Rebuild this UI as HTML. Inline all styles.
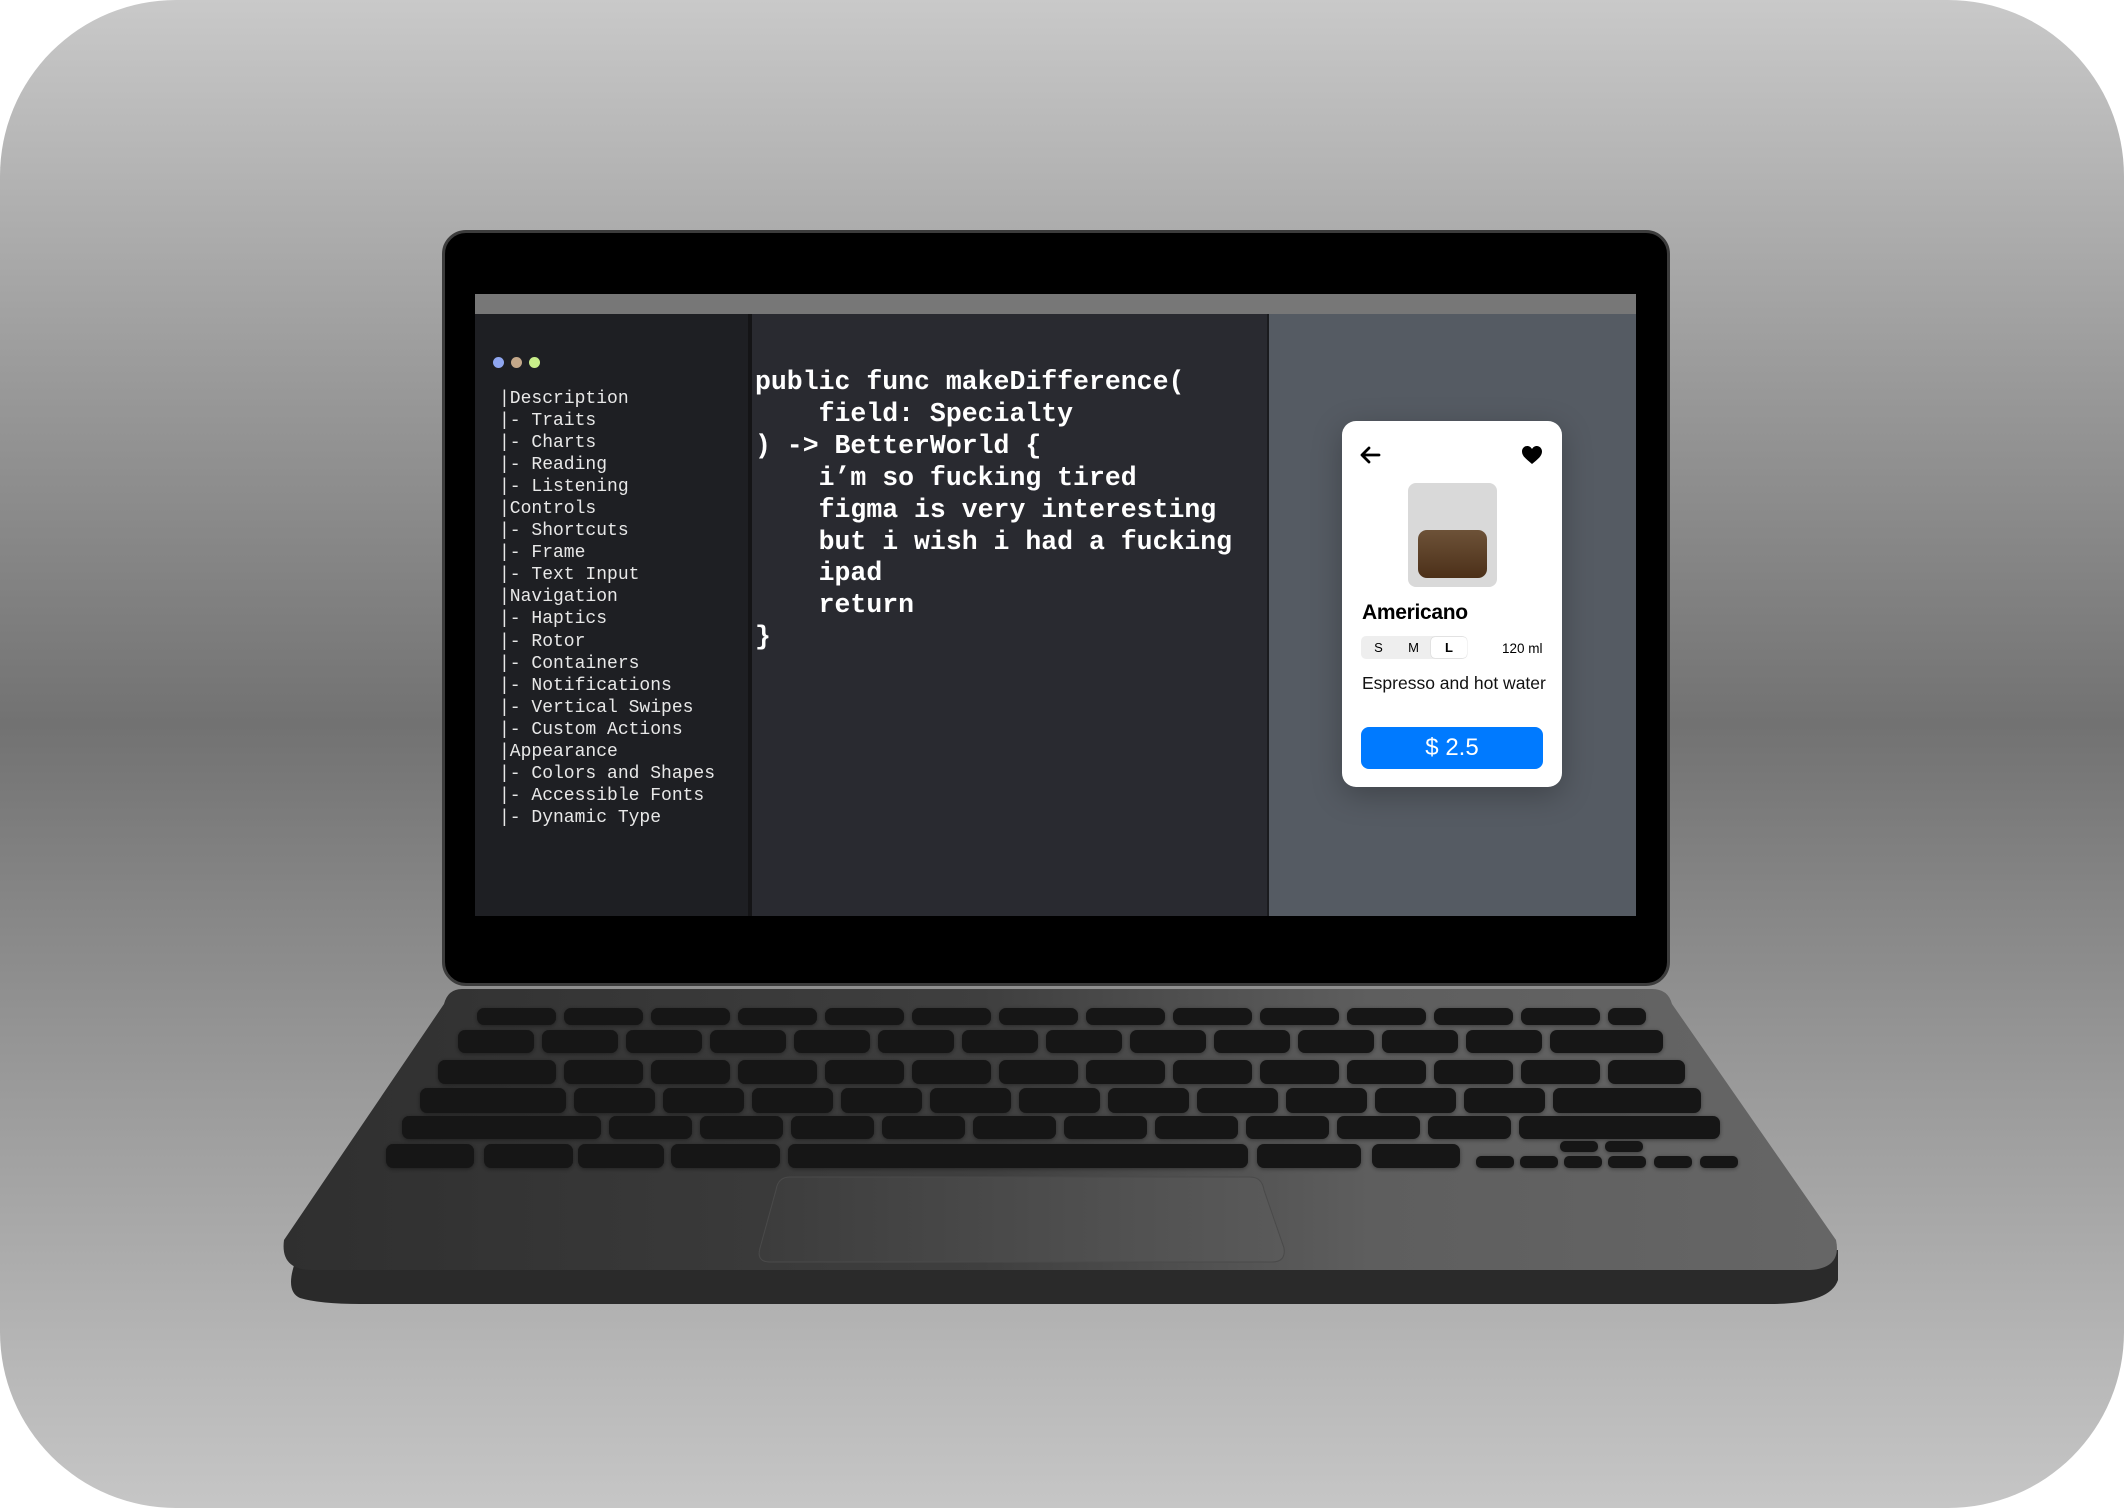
<!DOCTYPE html>
<html><head><meta charset="utf-8"><style>
html,body{margin:0;padding:0;background:#fff;}
body{width:2124px;height:1508px;position:relative;overflow:hidden;font-family:"Liberation Sans",sans-serif;}
.bg{position:absolute;left:0;top:0;width:2124px;height:1508px;border-radius:176px;background:linear-gradient(180deg,#c9c9c9 0%,#9a9a9a 25%,#727272 48%,#9a9a9a 72%,#c6c6c6 100%);}
.lid{position:absolute;left:442px;top:230px;width:1222px;height:750px;background:#000;border:3px solid #3c3c3c;border-radius:24px;}
.screen{position:absolute;left:475px;top:294px;width:1161px;height:622px;overflow:hidden;}
.bar{position:absolute;left:0;top:0;width:1161px;height:20px;background:#777;}
.side{position:absolute;left:0;top:20px;width:273px;height:602px;background:#1e1f23;}
.div1{position:absolute;left:273px;top:20px;width:4px;height:602px;background:#141416;}
.code{position:absolute;left:277px;top:20px;width:515px;height:602px;background:#292a30;}
.div2{position:absolute;left:792px;top:20px;width:2px;height:602px;background:#1a1b1e;}
.right{position:absolute;left:794px;top:20px;width:367px;height:602px;background:#555b63;}
.dot{position:absolute;top:43px;width:11px;height:11px;border-radius:50%;}
.tree{position:absolute;left:24px;top:74px;margin:0;font-family:"Liberation Mono",monospace;font-size:18px;line-height:22.05px;color:#e8e8e8;white-space:pre;}
.src{position:absolute;left:3px;top:53px;margin:0;font-family:"Liberation Mono",monospace;font-weight:bold;font-size:26.5px;line-height:31.9px;color:#fff;white-space:pre;}
.card{position:absolute;left:1342px;top:421px;width:220px;height:366px;background:#fff;border-radius:14px;box-shadow:0 8px 30px rgba(0,0,0,.25);}
</style></head><body>
<div class="bg"></div>
<div class="lid"></div>
<div class="screen">
 <div class="bar"></div>
 <div class="side">
  <div class="dot" style="left:18px;background:#8fa6f0"></div>
  <div class="dot" style="left:36px;background:#c4a88a"></div>
  <div class="dot" style="left:54px;background:#c8ee8a"></div>
<pre class="tree">|Description
|- Traits
|- Charts
|- Reading
|- Listening
|Controls
|- Shortcuts
|- Frame
|- Text Input
|Navigation
|- Haptics
|- Rotor
|- Containers
|- Notifications
|- Vertical Swipes
|- Custom Actions
|Appearance
|- Colors and Shapes
|- Accessible Fonts
|- Dynamic Type</pre>
 </div>
 <div class="div1"></div>
 <div class="code">
<pre class="src">public func makeDifference(
    field: Specialty
) -&gt; BetterWorld {
    i’m so fucking tired
    figma is very interesting
    but i wish i had a fucking
    ipad
    return
}</pre>
 </div>
 <div class="div2"></div>
 <div class="right"></div>
</div>

<div class="card">
 <svg style="position:absolute;left:17px;top:25px" width="22" height="18" viewBox="0 0 22 18"><path d="M20 9H3M10 2L3 9l7 7" stroke="#000" stroke-width="2.8" fill="none" stroke-linecap="round" stroke-linejoin="round"/></svg>
 <svg style="position:absolute;left:179px;top:24px" width="22" height="20" viewBox="0 0 22 20"><path d="M11 19C5 14 1 11 1 6.5 1 3.5 3.3 1 6.2 1 8.4 1 10 2.3 11 4 12 2.3 13.6 1 15.8 1 18.7 1 21 3.5 21 6.5 21 11 17 14 11 19Z" fill="#000"/></svg>
 <div style="position:absolute;left:66px;top:62px;width:89px;height:104px;background:#d9d9d9;border-radius:8px"></div>
 <div style="position:absolute;left:76px;top:109px;width:69px;height:48px;background:linear-gradient(180deg,#6d5238,#4c3019);border-radius:9px"></div>
 <div style="position:absolute;left:20px;top:180px;font-size:21px;font-weight:bold;color:#000;letter-spacing:-0.3px">Americano</div>
 <div style="position:absolute;left:19px;top:215px;width:106px;height:23px;background:#eee;border-radius:5px"></div>
 <div style="position:absolute;left:89px;top:216px;width:36px;height:21px;background:#fff;border-radius:4px;box-shadow:0 0 1px rgba(0,0,0,.3)"></div>
 <div style="position:absolute;left:19px;top:219px;width:35px;text-align:center;font-size:13px">S</div>
 <div style="position:absolute;left:54px;top:219px;width:35px;text-align:center;font-size:13px">M</div>
 <div style="position:absolute;left:89px;top:219px;width:36px;text-align:center;font-size:13px;font-weight:bold">L</div>
 <div style="position:absolute;left:160px;top:220px;font-size:13.5px">120 ml</div>
 <div style="position:absolute;left:20px;top:252px;font-size:17.5px;color:#111">Espresso and hot water</div>
 <div style="position:absolute;left:19px;top:306px;width:182px;height:42px;background:#007aff;border-radius:8px;color:#fff;font-size:24px;line-height:42px;text-align:center">$ 2.5</div>
</div>

<svg style="position:absolute;left:0;top:0" width="2124" height="1508" viewBox="0 0 2124 1508">
 <defs>
  <linearGradient id="deck" x1="0" y1="0" x2="1" y2="0">
   <stop offset="0" stop-color="#2f2f2f"/><stop offset="0.45" stop-color="#3f3f3f"/><stop offset="0.7" stop-color="#5e5e5e"/><stop offset="1" stop-color="#666"/>
  </linearGradient>
  <linearGradient id="pad" x1="0" y1="0" x2="1" y2="0">
   <stop offset="0" stop-color="#3c3c3c"/><stop offset="1" stop-color="#5a5a5a"/>
  </linearGradient>
  <filter id="ks" x="-10%" y="-30%" width="120%" height="160%"><feDropShadow dx="0" dy="1" stdDeviation="2" flood-color="#000" flood-opacity="0.4"/></filter>
 </defs>
 <path d="M300 1250 Q282 1290 300 1298 Q320 1304 360 1304 L1770 1304 Q1830 1304 1838 1280 L1838 1250 Z" fill="#2a2a2a"/>
 <path d="M462 989 L1652 989 Q1668 989 1672 1004 L1836 1240 Q1842 1268 1810 1270 L312 1270 Q280 1270 284 1240 L444 1004 Q448 989 462 989 Z" fill="url(#deck)"/>
 <path d="M790 1177 L1250 1177 Q1262 1177 1264 1190 L1284 1248 Q1286 1262 1272 1262 L770 1262 Q756 1262 760 1248 L776 1190 Q778 1177 790 1177 Z" fill="url(#pad)" stroke="#4a4a4a" stroke-width="1"/>
 <g fill="#161616" filter="url(#ks)">
  <rect x="477" y="1008" width="79" height="17" rx="7"/><rect x="564" y="1008" width="79" height="17" rx="7"/><rect x="651" y="1008" width="79" height="17" rx="7"/><rect x="738" y="1008" width="79" height="17" rx="7"/><rect x="825" y="1008" width="79" height="17" rx="7"/><rect x="912" y="1008" width="79" height="17" rx="7"/><rect x="999" y="1008" width="79" height="17" rx="7"/><rect x="1086" y="1008" width="79" height="17" rx="7"/><rect x="1173" y="1008" width="79" height="17" rx="7"/><rect x="1260" y="1008" width="79" height="17" rx="7"/><rect x="1347" y="1008" width="79" height="17" rx="7"/><rect x="1434" y="1008" width="79" height="17" rx="7"/><rect x="1521" y="1008" width="79" height="17" rx="7"/><rect x="1608" y="1008" width="38" height="17" rx="7"/>
  <rect x="458" y="1030" width="76" height="23" rx="7"/><rect x="542" y="1030" width="76" height="23" rx="7"/><rect x="626" y="1030" width="76" height="23" rx="7"/><rect x="710" y="1030" width="76" height="23" rx="7"/><rect x="794" y="1030" width="76" height="23" rx="7"/><rect x="878" y="1030" width="76" height="23" rx="7"/><rect x="962" y="1030" width="76" height="23" rx="7"/><rect x="1046" y="1030" width="76" height="23" rx="7"/><rect x="1130" y="1030" width="76" height="23" rx="7"/><rect x="1214" y="1030" width="76" height="23" rx="7"/><rect x="1298" y="1030" width="76" height="23" rx="7"/><rect x="1382" y="1030" width="76" height="23" rx="7"/><rect x="1466" y="1030" width="76" height="23" rx="7"/><rect x="1550" y="1030" width="113" height="23" rx="7"/>
  <rect x="438" y="1060" width="118" height="24" rx="7"/><rect x="564" y="1060" width="79" height="24" rx="7"/><rect x="651" y="1060" width="79" height="24" rx="7"/><rect x="738" y="1060" width="79" height="24" rx="7"/><rect x="825" y="1060" width="79" height="24" rx="7"/><rect x="912" y="1060" width="79" height="24" rx="7"/><rect x="999" y="1060" width="79" height="24" rx="7"/><rect x="1086" y="1060" width="79" height="24" rx="7"/><rect x="1173" y="1060" width="79" height="24" rx="7"/><rect x="1260" y="1060" width="79" height="24" rx="7"/><rect x="1347" y="1060" width="79" height="24" rx="7"/><rect x="1434" y="1060" width="79" height="24" rx="7"/><rect x="1521" y="1060" width="79" height="24" rx="7"/><rect x="1608" y="1060" width="77" height="24" rx="7"/>
  <rect x="420" y="1088" width="146" height="25" rx="7"/><rect x="574" y="1088" width="81" height="25" rx="7"/><rect x="663" y="1088" width="81" height="25" rx="7"/><rect x="752" y="1088" width="81" height="25" rx="7"/><rect x="841" y="1088" width="81" height="25" rx="7"/><rect x="930" y="1088" width="81" height="25" rx="7"/><rect x="1019" y="1088" width="81" height="25" rx="7"/><rect x="1108" y="1088" width="81" height="25" rx="7"/><rect x="1197" y="1088" width="81" height="25" rx="7"/><rect x="1286" y="1088" width="81" height="25" rx="7"/><rect x="1375" y="1088" width="81" height="25" rx="7"/><rect x="1464" y="1088" width="81" height="25" rx="7"/><rect x="1553" y="1088" width="148" height="25" rx="7"/>
  <rect x="402" y="1116" width="199" height="23" rx="7"/><rect x="609" y="1116" width="83" height="23" rx="7"/><rect x="700" y="1116" width="83" height="23" rx="7"/><rect x="791" y="1116" width="83" height="23" rx="7"/><rect x="882" y="1116" width="83" height="23" rx="7"/><rect x="973" y="1116" width="83" height="23" rx="7"/><rect x="1064" y="1116" width="83" height="23" rx="7"/><rect x="1155" y="1116" width="83" height="23" rx="7"/><rect x="1246" y="1116" width="83" height="23" rx="7"/><rect x="1337" y="1116" width="83" height="23" rx="7"/><rect x="1428" y="1116" width="83" height="23" rx="7"/><rect x="1519" y="1116" width="201" height="23" rx="7"/>
  <rect x="386" y="1144" width="88" height="24" rx="7"/><rect x="484" y="1144" width="89" height="24" rx="7"/><rect x="578" y="1144" width="86" height="24" rx="7"/><rect x="671" y="1144" width="109" height="24" rx="7"/><rect x="788" y="1144" width="460" height="24" rx="7"/><rect x="1257" y="1144" width="104" height="24" rx="7"/><rect x="1372" y="1144" width="88" height="24" rx="7"/>
  <rect x="1560" y="1141" width="38" height="11" rx="5"/><rect x="1605" y="1141" width="38" height="11" rx="5"/>
  <rect x="1476" y="1156" width="38" height="12" rx="5"/><rect x="1520" y="1156" width="38" height="12" rx="5"/><rect x="1564" y="1156" width="38" height="12" rx="5"/><rect x="1608" y="1156" width="38" height="12" rx="5"/><rect x="1654" y="1156" width="38" height="12" rx="5"/><rect x="1700" y="1156" width="38" height="12" rx="5"/>
 </g>
</svg>
</body></html>
